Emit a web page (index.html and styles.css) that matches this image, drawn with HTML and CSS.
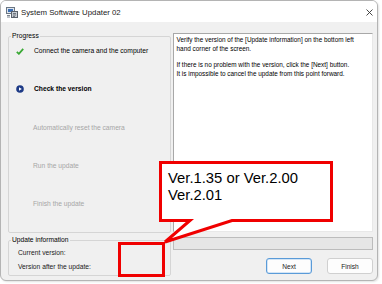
FILE: index.html
```html
<!DOCTYPE html>
<html>
<head>
<meta charset="utf-8">
<link rel="stylesheet" href="styles.css">
</head>
<body>
<div class="page">
  <div class="window">
    <div class="titlebar">
      <svg class="app-icon" width="12" height="11" viewBox="0 0 12 11">
        <rect x="0.5" y="0.5" width="8" height="6" fill="#dfe6ee" stroke="#6b7683"/>
        <rect x="2" y="2" width="5" height="3" fill="#3c6fb4"/>
        <rect x="5.5" y="4.5" width="6" height="6" fill="#c9ced4" stroke="#59616b"/>
        <path d="M7 6.5h3M7 8h3M7 9.5h2" stroke="#59616b" stroke-width="0.8"/>
        <path d="M1 8.5h3M1 10h3" stroke="#7a838d" stroke-width="1"/>
      </svg>
      <span class="title">System Software Updater 02</span>
      <svg class="close" width="7" height="7" viewBox="0 0 7 7">
        <path d="M0.5 0.5L6.5 6.5M6.5 0.5L0.5 6.5" stroke="#333" stroke-width="0.9"/>
      </svg>
    </div>
    <div class="body">
      <div class="left">
        <fieldset class="group progress">
          <legend>Progress</legend>
          <ul class="steps">
            <li class="step done">
              <span class="ico"><svg width="8" height="7" viewBox="0 0 8 7"><path d="M0.8 3.8L2.9 5.8L7.2 0.9" fill="none" stroke="#3aa935" stroke-width="1.8"/></svg></span>
              <span>Connect the camera and the computer</span>
            </li>
            <li class="step current">
              <span class="ico"><svg width="8" height="8" viewBox="0 0 8 8"><circle cx="4" cy="4" r="3.8" fill="#1d3a86"/><path d="M3 2.2L5.8 4L3 5.8Z" fill="#fff"/></svg></span>
              <span>Check the version</span>
            </li>
            <li class="step todo"><span class="ico"></span><span>Automatically reset the camera</span></li>
            <li class="step todo"><span class="ico"></span><span>Run the update</span></li>
            <li class="step todo"><span class="ico"></span><span>Finish the update</span></li>
          </ul>
        </fieldset>
        <fieldset class="group info">
          <legend>Update information</legend>
          <div class="info-row">Current version:</div>
          <div class="info-row">Version after the update:</div>
        </fieldset>
      </div>
      <div class="right">
        <div class="message">
          <p>Verify the version of the [Update information] on the bottom left hand corner of the screen.</p>
          <p>If there is no problem with the version, click the [Next] button.<br>It is impossible to cancel the update from this point forward.</p>
        </div>
        <div class="bar"></div>
        <div class="buttons">
          <button class="btn primary">Next</button>
          <button class="btn">Finish</button>
        </div>
      </div>
    </div>
  </div>
  <svg class="annot" width="382" height="284" viewBox="0 0 382 284">
    <path d="M160.5 162.5H331.5V220.5H232L165 242L190 220.5H160.5Z" fill="#fff" stroke="#f00000" stroke-width="3" stroke-linejoin="miter"/>
    <rect x="119.5" y="243.5" width="44" height="32" fill="none" stroke="#f00000" stroke-width="3"/>
  </svg>
  <div class="callout-text">Ver.1.35 or Ver.2.00<br>Ver.2.01</div>
</div>
</body>
</html>
```

FILE: styles.css
```css
html, body {
  margin: 0;
  padding: 0;
  background: #fff;
}
.page {
  position: relative;
  width: 382px;
  height: 284px;
  overflow: hidden;
  font-family: "Liberation Sans", Arial, sans-serif;
}
.window {
  box-sizing: border-box;
  width: 378px;
  height: 281px;
  border: 1px solid #b4b4b4;
  border-radius: 6px;
  background: #f0f0f0;
  overflow: hidden;
  display: flex;
  flex-direction: column;
  box-shadow: 1px 1px 2px rgba(0,0,0,0.12);
}
.titlebar {
  height: 21px;
  box-sizing: border-box;
  padding-top: 2px;
  background: #fff;
  display: flex;
  align-items: center;
  padding-left: 5px;
  padding-right: 4px;
}
.app-icon {
  flex: none;
  margin-right: 3px;
}
.title {
  font-size: 7.8px;
  color: #1a1a1a;
  flex: 1;
}
.close {
  flex: none;
}
.body {
  flex: 1;
  display: flex;
  padding: 10px 4px 0 7px;
  gap: 2px;
}
.left {
  width: 163px;
  display: flex;
  flex-direction: column;
  gap: 3px;
}
.group {
  margin: 0;
  box-sizing: border-box;
  border: 1px solid #d5d5d5;
  border-radius: 2px;
  font-size: 6.7px;
  color: #000;
}
.group legend {
  padding: 0 1px;
  line-height: 8px;
  font-size: 6.7px;
}
.progress {
  height: 201px;
  padding: 7px 4px 0 7px;
}
.progress legend {
  margin-left: -5px;
}
.steps {
  list-style: none;
  margin: 0;
  padding: 0;
}
.step {
  height: 38.3px;
  display: flex;
  align-items: flex-start;
  line-height: 8px;
}
.step .ico {
  width: 18px;
  height: 8px;
  flex: none;
  display: flex;
  align-items: center;
}
.step.current {
  font-weight: bold;
}
.step.todo {
  color: #a6a6a6;
}
.step.todo span:last-child {
  margin-left: -1px;
}
.info {
  height: 40px;
  padding: 5px 4px 0 9px;
}
.info legend {
  margin-left: -7px;
}
.info-row {
  line-height: 8px;
  height: 14px;
  color: #1a1a1a;
}
.right {
  width: 201px;
  display: flex;
  flex-direction: column;
  padding-top: 1px;
}
.message {
  box-sizing: border-box;
  height: 199px;
  background: #fff;
  border: 1px solid;
  border-color: #a8a8a8 #e8e8e8 #e8e8e8 #a8a8a8;
  padding: 1px 3px;
  font-size: 6.4px;
  line-height: 9px;
  color: #000;
}
.message p {
  margin: 0 0 7px 0;
}
.bar {
  margin-top: 5px;
  height: 13px;
  box-sizing: border-box;
  background: #e6e6e6;
  border: 1px solid #bcbcbc;
}
.buttons {
  margin-top: 8px;
  display: flex;
  justify-content: flex-end;
  gap: 15px;
}
.btn {
  box-sizing: border-box;
  height: 16px;
  width: 46px;
  padding: 0;
  margin: 0;
  font-family: "Liberation Sans", Arial, sans-serif;
  font-size: 6.6px;
  color: #1a1a1a;
  background: #fdfdfd;
  border: 1px solid #d0d0d0;
  border-radius: 3px;
}
.btn.primary {
  border: 1px solid #5a9bd8;
  box-shadow: inset 0 0 0 0.5px #a9cdf0;
}
.annot {
  position: absolute;
  left: 0;
  top: 0;
  pointer-events: none;
}
.callout-text {
  position: absolute;
  left: 168px;
  top: 170px;
  font-family: "Liberation Sans", Arial, sans-serif;
  font-size: 14.8px;
  line-height: 17px;
  color: #000;
}
```
